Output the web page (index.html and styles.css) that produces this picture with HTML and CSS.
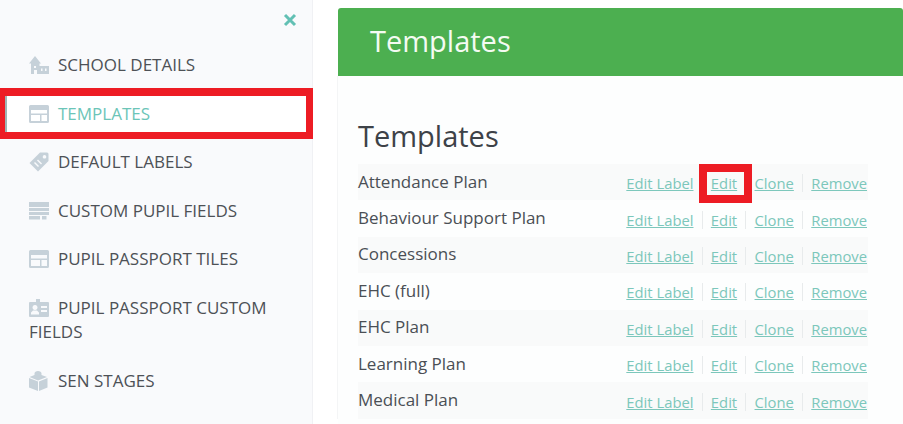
FILE: index.html
```html
<!DOCTYPE html>
<html lang="en">
<head>
<meta charset="utf-8">
<title>Templates</title>
<link rel="stylesheet" href="styles.css">
</head>
<body>
<div class="page">
  <aside class="sidebar">
    <div class="close-row">
      <svg class="close" viewBox="0 0 14 14"><path d="M2 2 L12 12 M12 2 L2 12"/></svg>
    </div>
    <nav class="nav">
      <a class="item"><svg class="ico" viewBox="0 0 20 20"><path fill-rule="evenodd" d="M0 8.500 L6 1 L12 8.500 L10.500 8.500 L10.500 11 H20 V19 H2 V8.500Z M5 11 V13 H7 V11Z M5 15 V19 H8 V15Z M12 13.500 V16 H13.500 V13.500Z M16 13.500 V16 H17.500 V13.500Z"/></svg>SCHOOL DETAILS</a>
      <a class="item active"><svg class="ico" viewBox="0 0 20 20"><path fill-rule="evenodd" d="M1.500 1 H18.500 A1.500 1.500 0 0 1 20 2.500 V17.500 A1.500 1.500 0 0 1 18.500 19 H1.500 A1.500 1.500 0 0 1 0 17.500 V2.500 A1.500 1.500 0 0 1 1.500 1Z M2 6 V9.500 H18 V6Z M2 11 V17 H11 V11Z M12.500 11 V17 H18 V11Z"/></svg>TEMPLATES</a>
      <a class="item"><svg class="ico" viewBox="0 0 20 20"><path fill-rule="evenodd" d="M11 0.500 H18 A1.500 1.500 0 0 1 19.500 2 V9 L9 19.500 L0.500 11Z M15.500 3 A1.800 1.800 0 1 0 15.501 3Z M6 10 L5 11 L9 15 L10 14Z M9 7.500 L8 8.500 L12 12.500 L13 11.500Z"/></svg>DEFAULT LABELS</a>
      <a class="item"><svg class="ico" viewBox="0 0 20 20"><path d="M0 1 H20 V6 H0Z M0 7 H20 V10 H0Z M0 11 H20 V14 H0Z M0 15 H11 V18.500 H0Z M13 15 H17.500 V18.500 H13Z"/></svg>CUSTOM PUPIL FIELDS</a>
      <a class="item"><svg class="ico" viewBox="0 0 20 20"><path fill-rule="evenodd" d="M1.500 1 H18.500 A1.500 1.500 0 0 1 20 2.500 V17.500 A1.500 1.500 0 0 1 18.500 19 H1.500 A1.500 1.500 0 0 1 0 17.500 V2.500 A1.500 1.500 0 0 1 1.500 1Z M2 6 V9.500 H18 V6Z M2 11 V17 H11 V11Z M12.500 11 V17 H18 V11Z"/></svg>PUPIL PASSPORT TILES</a>
      <a class="item"><svg class="ico" viewBox="0 0 20 20"><path fill-rule="evenodd" d="M1 4 H7 V1 H11 V4 H19 A1 1 0 0 1 20 5 V18 A1 1 0 0 1 19 19 H1 A1 1 0 0 1 0 18 V5 A1 1 0 0 1 1 4Z M6 7 A2.500 2.500 0 1 0 6.001 7Z M2 16.500 H10 V14.500 L8 12.500 H4 L2 14.500Z M12 8 V10 H18 V8Z M12 12 V14 H18 V12Z"/></svg>PUPIL PASSPORT CUSTOM FIELDS</a>
      <a class="item"><svg class="ico" viewBox="0 0 20 20"><path d="M9 0 C11 0 12.500 1 12.500 2.500 V4 L18 6 L9 9.500 L0.500 6 L5.500 4 V2.500 C5.500 1 7 0 9 0Z M0 7 L9 10.500 V20 L0 16.500Z M18.500 7 V16.500 L10 20 V10.500Z"/></svg>SEN STAGES</a>
    </nav>
  </aside>
  <main class="main">
    <header class="banner">Templates</header>
    <section class="body">
      <h1 class="title">Templates</h1>
      <div class="row">
        <span class="name">Attendance Plan</span>
        <span class="actions"><a>Edit Label</a><a>Edit</a><a>Clone</a><a>Remove</a></span>
      </div>
      <div class="row">
        <span class="name">Behaviour Support Plan</span>
        <span class="actions"><a>Edit Label</a><a>Edit</a><a>Clone</a><a>Remove</a></span>
      </div>
      <div class="row">
        <span class="name">Concessions</span>
        <span class="actions"><a>Edit Label</a><a>Edit</a><a>Clone</a><a>Remove</a></span>
      </div>
      <div class="row">
        <span class="name">EHC (full)</span>
        <span class="actions"><a>Edit Label</a><a>Edit</a><a>Clone</a><a>Remove</a></span>
      </div>
      <div class="row">
        <span class="name">EHC Plan</span>
        <span class="actions"><a>Edit Label</a><a>Edit</a><a>Clone</a><a>Remove</a></span>
      </div>
      <div class="row">
        <span class="name">Learning Plan</span>
        <span class="actions"><a>Edit Label</a><a>Edit</a><a>Clone</a><a>Remove</a></span>
      </div>
      <div class="row">
        <span class="name">Medical Plan</span>
        <span class="actions"><a>Edit Label</a><a>Edit</a><a>Clone</a><a>Remove</a></span>
      </div>
    </section>
  </main>
  <div class="mark mark-nav"></div>
  <div class="mark mark-edit"></div>
</div>
</body>
</html>
```
FILE: styles.css
```css
html, body { margin: 0; padding: 0; }
body {
  width: 903px;
  height: 424px;
  overflow: hidden;
  background: #ffffff;
  font-family: "Open Sans", "Noto Sans", sans-serif;
  color: #4a4f55;
}
.page {
  position: relative;
  display: flex;
  width: 903px;
  height: 424px;
  overflow: hidden;
}
.sidebar {
  box-sizing: border-box;
  flex: 0 0 313px;
  height: 424px;
  background: #f9fafc;
  border-right: 1px solid #f0f1f4;
}
.close-row {
  display: flex;
  justify-content: flex-end;
  padding: 13px 15px 0 0;
  height: 28px;
  box-sizing: content-box;
}
.close { width: 14px; height: 14px; }
.close path { stroke: #62c0b4; stroke-width: 3; fill: none; }
.nav { display: flex; flex-direction: column; padding-top: 0; }
.item {
  display: block;
  padding: 12px 40px 12px 29px;
  font-size: 17px;
  line-height: 24.500px;
  color: #4d5156;
}
.item.active {
  color: #6cc5b8;
  background: #ffffff;
}
.ico {
  width: 20px;
  height: 20px;
  margin-right: 9px;
  vertical-align: -4px;
  fill: #c6d1d9;
}
.main {
  box-sizing: border-box;
  margin: 8px 0 0 25px;
  width: 565px;
  flex: none;
  background: #fdfefe;
}
.banner {
  box-sizing: border-box;
  height: 68px;
  padding: 10px 0 0 32px;
  background: #4caf50;
  border-radius: 3px 3px 0 0;
  color: #f4fbf2;
  font-size: 29px;
  line-height: 46px;
}
.body { padding: 39px 0 0 20px; border-left: 1px solid #f4f5f6; margin-left: -1px; }
.title {
  margin: 0 0 7px;
  font-size: 29px;
  font-weight: 400;
  line-height: 42px;
  color: #3d4248;
}
.row {
  display: flex;
  justify-content: space-between;
  align-items: center;
  height: 36.400px;
  width: 510px;
  font-size: 17px;
  color: #4a4f55;
}
.row:nth-child(even) { background: #f9fafa; }
.name { line-height: 24px; position: relative; top: -0.500px; }
.actions { display: flex; font-size: 14.800px; padding-top: 2px; }
.actions a {
  color: #7cc7bb;
  text-decoration: underline;
  padding: 0 8.200px;
  border-left: 1px solid #e8ebec;
  line-height: 18px;
}
.actions a:first-child { border-left: 0; }
.actions a:last-child { padding-right: 1px; }
.mark { position: absolute; box-sizing: border-box; border: 8px solid #ed1c24; }
.mark-nav {
  left: 0;
  top: 88px;
  width: 313px;
  height: 51px;
  border-width: 8px 7px 7px 5px;
  box-shadow: inset 2px 0 0 #9fb4b4;
}
.mark-edit { left: 699px; top: 164px; width: 53px; height: 39px; }
```
